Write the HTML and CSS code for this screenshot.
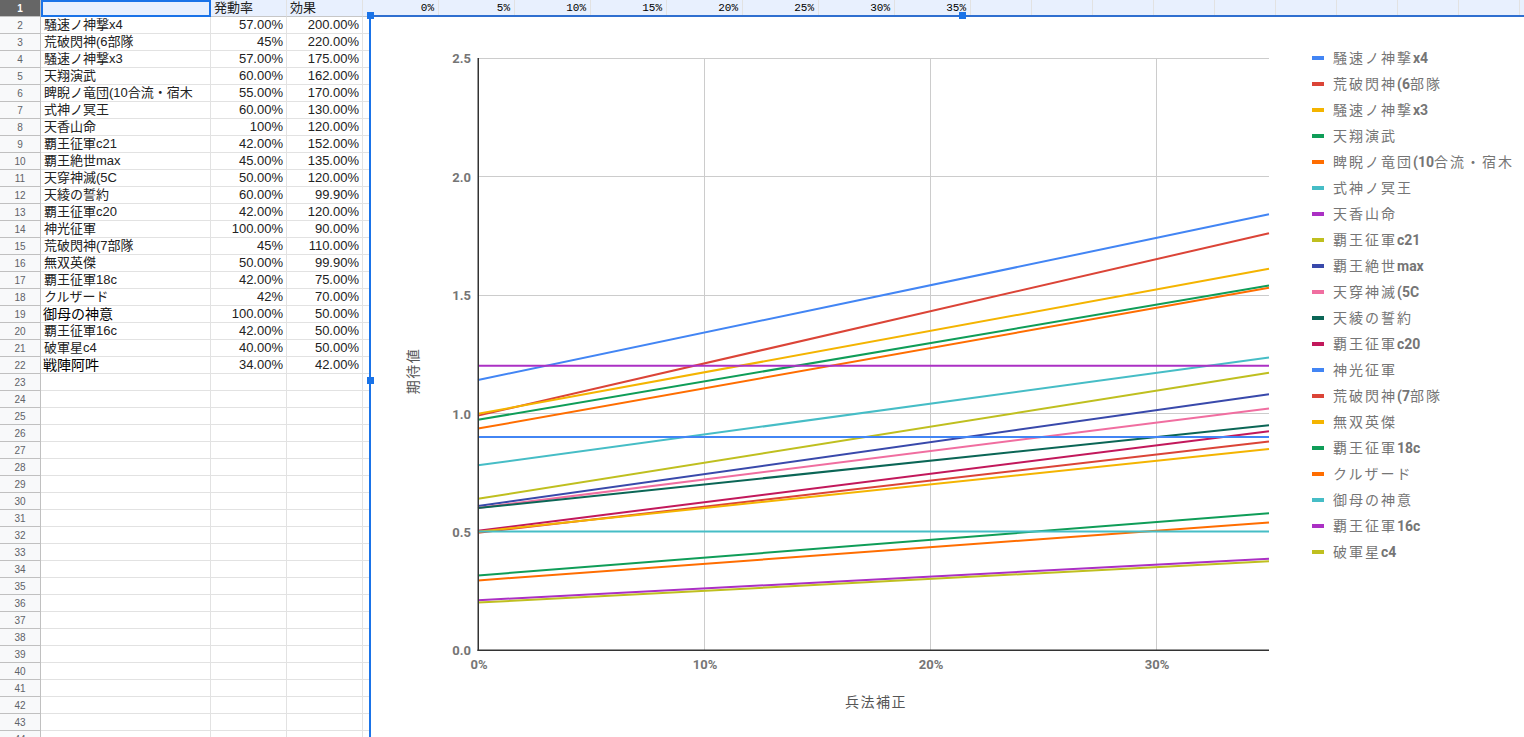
FILE: index.html
```html
<!DOCTYPE html>
<html lang="ja">
<head>
<meta charset="utf-8">
<title>Sheet</title>
<link rel="stylesheet" href="styles.css">
</head>
<body>
<div class="sheet">
  <div class="row head">
    <span class="rh">1</span><span class="cell name sel"></span><span class="cell">発動率</span><span class="cell">効果</span>
    <span class="cell pct">0%</span><span class="cell pct">5%</span><span class="cell pct">10%</span><span class="cell pct">15%</span><span class="cell pct">20%</span><span class="cell pct">25%</span><span class="cell pct">30%</span><span class="cell pct">35%</span>
    <span class="cell narrow"></span><span class="cell narrow"></span><span class="cell narrow"></span><span class="cell narrow"></span><span class="cell narrow"></span><span class="cell narrow"></span><span class="cell narrow"></span><span class="cell narrow"></span><span class="cell narrow"></span><span class="cell narrow"></span>
  </div>
  <div class="row"><span class="rh">2</span><span class="cell name">騒速ノ神撃x4</span><span class="cell num">57.00%</span><span class="cell num">200.00%</span><span class="cell"></span></div>
  <div class="row"><span class="rh">3</span><span class="cell name">荒破閃神(6部隊</span><span class="cell num">45%</span><span class="cell num">220.00%</span><span class="cell"></span></div>
  <div class="row"><span class="rh">4</span><span class="cell name">騒速ノ神撃x3</span><span class="cell num">57.00%</span><span class="cell num">175.00%</span><span class="cell"></span></div>
  <div class="row"><span class="rh">5</span><span class="cell name">天翔演武</span><span class="cell num">60.00%</span><span class="cell num">162.00%</span><span class="cell"></span></div>
  <div class="row"><span class="rh">6</span><span class="cell name">睥睨ノ竜団(10合流・宿木</span><span class="cell num">55.00%</span><span class="cell num">170.00%</span><span class="cell"></span></div>
  <div class="row"><span class="rh">7</span><span class="cell name">式神ノ冥王</span><span class="cell num">60.00%</span><span class="cell num">130.00%</span><span class="cell"></span></div>
  <div class="row"><span class="rh">8</span><span class="cell name">天香山命</span><span class="cell num">100%</span><span class="cell num">120.00%</span><span class="cell"></span></div>
  <div class="row"><span class="rh">9</span><span class="cell name">覇王征軍c21</span><span class="cell num">42.00%</span><span class="cell num">152.00%</span><span class="cell"></span></div>
  <div class="row"><span class="rh">10</span><span class="cell name">覇王絶世max</span><span class="cell num">45.00%</span><span class="cell num">135.00%</span><span class="cell"></span></div>
  <div class="row"><span class="rh">11</span><span class="cell name">天穿神滅(5C</span><span class="cell num">50.00%</span><span class="cell num">120.00%</span><span class="cell"></span></div>
  <div class="row"><span class="rh">12</span><span class="cell name">天綾の誓約</span><span class="cell num">60.00%</span><span class="cell num">99.90%</span><span class="cell"></span></div>
  <div class="row"><span class="rh">13</span><span class="cell name">覇王征軍c20</span><span class="cell num">42.00%</span><span class="cell num">120.00%</span><span class="cell"></span></div>
  <div class="row"><span class="rh">14</span><span class="cell name">神光征軍</span><span class="cell num">100.00%</span><span class="cell num">90.00%</span><span class="cell"></span></div>
  <div class="row"><span class="rh">15</span><span class="cell name">荒破閃神(7部隊</span><span class="cell num">45%</span><span class="cell num">110.00%</span><span class="cell"></span></div>
  <div class="row"><span class="rh">16</span><span class="cell name">無双英傑</span><span class="cell num">50.00%</span><span class="cell num">99.90%</span><span class="cell"></span></div>
  <div class="row"><span class="rh">17</span><span class="cell name">覇王征軍18c</span><span class="cell num">42.00%</span><span class="cell num">75.00%</span><span class="cell"></span></div>
  <div class="row"><span class="rh">18</span><span class="cell name">クルザード</span><span class="cell num">42%</span><span class="cell num">70.00%</span><span class="cell"></span></div>
  <div class="row"><span class="rh">19</span><span class="cell name alt">御母の神意</span><span class="cell num">100.00%</span><span class="cell num">50.00%</span><span class="cell"></span></div>
  <div class="row"><span class="rh">20</span><span class="cell name">覇王征軍16c</span><span class="cell num">42.00%</span><span class="cell num">50.00%</span><span class="cell"></span></div>
  <div class="row"><span class="rh">21</span><span class="cell name">破軍星c4</span><span class="cell num">40.00%</span><span class="cell num">50.00%</span><span class="cell"></span></div>
  <div class="row"><span class="rh">22</span><span class="cell name alt">戦陣阿吽</span><span class="cell num">34.00%</span><span class="cell num">42.00%</span><span class="cell"></span></div>
  <div class="row"><span class="rh">23</span><span class="cell name"></span><span class="cell"></span><span class="cell"></span><span class="cell"></span></div>
  <div class="row"><span class="rh">24</span><span class="cell name"></span><span class="cell"></span><span class="cell"></span><span class="cell"></span></div>
  <div class="row"><span class="rh">25</span><span class="cell name"></span><span class="cell"></span><span class="cell"></span><span class="cell"></span></div>
  <div class="row"><span class="rh">26</span><span class="cell name"></span><span class="cell"></span><span class="cell"></span><span class="cell"></span></div>
  <div class="row"><span class="rh">27</span><span class="cell name"></span><span class="cell"></span><span class="cell"></span><span class="cell"></span></div>
  <div class="row"><span class="rh">28</span><span class="cell name"></span><span class="cell"></span><span class="cell"></span><span class="cell"></span></div>
  <div class="row"><span class="rh">29</span><span class="cell name"></span><span class="cell"></span><span class="cell"></span><span class="cell"></span></div>
  <div class="row"><span class="rh">30</span><span class="cell name"></span><span class="cell"></span><span class="cell"></span><span class="cell"></span></div>
  <div class="row"><span class="rh">31</span><span class="cell name"></span><span class="cell"></span><span class="cell"></span><span class="cell"></span></div>
  <div class="row"><span class="rh">32</span><span class="cell name"></span><span class="cell"></span><span class="cell"></span><span class="cell"></span></div>
  <div class="row"><span class="rh">33</span><span class="cell name"></span><span class="cell"></span><span class="cell"></span><span class="cell"></span></div>
  <div class="row"><span class="rh">34</span><span class="cell name"></span><span class="cell"></span><span class="cell"></span><span class="cell"></span></div>
  <div class="row"><span class="rh">35</span><span class="cell name"></span><span class="cell"></span><span class="cell"></span><span class="cell"></span></div>
  <div class="row"><span class="rh">36</span><span class="cell name"></span><span class="cell"></span><span class="cell"></span><span class="cell"></span></div>
  <div class="row"><span class="rh">37</span><span class="cell name"></span><span class="cell"></span><span class="cell"></span><span class="cell"></span></div>
  <div class="row"><span class="rh">38</span><span class="cell name"></span><span class="cell"></span><span class="cell"></span><span class="cell"></span></div>
  <div class="row"><span class="rh">39</span><span class="cell name"></span><span class="cell"></span><span class="cell"></span><span class="cell"></span></div>
  <div class="row"><span class="rh">40</span><span class="cell name"></span><span class="cell"></span><span class="cell"></span><span class="cell"></span></div>
  <div class="row"><span class="rh">41</span><span class="cell name"></span><span class="cell"></span><span class="cell"></span><span class="cell"></span></div>
  <div class="row"><span class="rh">42</span><span class="cell name"></span><span class="cell"></span><span class="cell"></span><span class="cell"></span></div>
  <div class="row"><span class="rh">43</span><span class="cell name"></span><span class="cell"></span><span class="cell"></span><span class="cell"></span></div>
  <div class="row"><span class="rh">44</span><span class="cell name"></span><span class="cell"></span><span class="cell"></span><span class="cell"></span></div>

  <div class="chart">
    <svg class="plot" width="1184" height="730" viewBox="371 17 1184 730" xmlns="http://www.w3.org/2000/svg">
      <g class="grid" stroke="#cccccc" stroke-width="1">
        <line x1="478" y1="58.5" x2="1269" y2="58.5"/>
        <line x1="478" y1="176.5" x2="1269" y2="176.5"/>
        <line x1="478" y1="295.5" x2="1269" y2="295.5"/>
        <line x1="478" y1="413.5" x2="1269" y2="413.5"/>
        <line x1="478" y1="531.5" x2="1269" y2="531.5"/>
        <line x1="704.5" y1="58" x2="704.5" y2="650"/>
        <line x1="930.5" y1="58" x2="930.5" y2="650"/>
        <line x1="1156.5" y1="58" x2="1156.5" y2="650"/>
      </g>
      <g class="series" stroke-width="2" fill="none">
        <line x1="478" y1="380.0" x2="1269" y2="214.3" stroke="#4285f4"/>
        <line x1="478" y1="415.6" x2="1269" y2="233.2" stroke="#db4437"/>
        <line x1="478" y1="413.8" x2="1269" y2="268.8" stroke="#f4b400"/>
        <line x1="478" y1="419.8" x2="1269" y2="285.6" stroke="#0f9d58"/>
        <line x1="478" y1="428.6" x2="1269" y2="287.7" stroke="#ff6d00"/>
        <line x1="478" y1="465.3" x2="1269" y2="357.6" stroke="#46bdc6"/>
        <line x1="478" y1="365.8" x2="1269" y2="365.8" stroke="#ab30c4"/>
        <line x1="478" y1="498.8" x2="1269" y2="372.8" stroke="#bfbf1f"/>
        <line x1="478" y1="506.1" x2="1269" y2="394.3" stroke="#3949ab"/>
        <line x1="478" y1="507.9" x2="1269" y2="408.5" stroke="#f06ea0"/>
        <line x1="478" y1="508.1" x2="1269" y2="425.3" stroke="#0b6656"/>
        <line x1="478" y1="530.7" x2="1269" y2="431.2" stroke="#c2185b"/>
        <line x1="478" y1="436.9" x2="1269" y2="436.9" stroke="#4285f4"/>
        <line x1="478" y1="532.8" x2="1269" y2="441.6" stroke="#db4437"/>
        <line x1="478" y1="531.7" x2="1269" y2="449.0" stroke="#f4b400"/>
        <line x1="478" y1="575.4" x2="1269" y2="513.2" stroke="#0f9d58"/>
        <line x1="478" y1="580.4" x2="1269" y2="522.4" stroke="#ff6d00"/>
        <line x1="478" y1="531.6" x2="1269" y2="531.6" stroke="#46bdc6"/>
        <line x1="478" y1="600.3" x2="1269" y2="558.8" stroke="#ab30c4"/>
        <line x1="478" y1="602.6" x2="1269" y2="561.2" stroke="#bfbf1f"/>
      </g>
      <g class="axes" stroke="#333333" stroke-width="1.5">
        <line x1="478.25" y1="58" x2="478.25" y2="651"/>
        <line x1="477.5" y1="650.25" x2="1269" y2="650.25"/>
      </g>
      <g class="ticks">
        <text x="471" y="63" text-anchor="end">2.5</text>
        <text x="471" y="181.5" text-anchor="end">2.0</text>
        <text x="471" y="300" text-anchor="end">1.5</text>
        <text x="471" y="418.5" text-anchor="end">1.0</text>
        <text x="471" y="536.5" text-anchor="end">0.5</text>
        <text x="471" y="655" text-anchor="end">0.0</text>
        <text x="479" y="669" text-anchor="middle">0%</text>
        <text x="705" y="669" text-anchor="middle">10%</text>
        <text x="931" y="669" text-anchor="middle">20%</text>
        <text x="1157" y="669" text-anchor="middle">30%</text>
      </g>
      <text class="title" x="876" y="707" text-anchor="middle">兵法補正</text>
      <text class="title" transform="translate(418 371) rotate(-90)" text-anchor="middle">期待値</text>
    </svg>

    <div class="legend">
      <div class="li"><span class="sw c1"></span><span class="lt"><span class="j">騒速ノ神撃</span>x4</span></div>
      <div class="li"><span class="sw c2"></span><span class="lt"><span class="j">荒破閃神</span>(6<span class="j">部隊</span></span></div>
      <div class="li"><span class="sw c3"></span><span class="lt"><span class="j">騒速ノ神撃</span>x3</span></div>
      <div class="li"><span class="sw c4"></span><span class="lt"><span class="j">天翔演武</span></span></div>
      <div class="li"><span class="sw c5"></span><span class="lt"><span class="j">睥睨ノ竜団</span>(10<span class="j">合流・宿木</span></span></div>
      <div class="li"><span class="sw c6"></span><span class="lt"><span class="j">式神ノ冥王</span></span></div>
      <div class="li"><span class="sw c7"></span><span class="lt"><span class="j">天香山命</span></span></div>
      <div class="li"><span class="sw c8"></span><span class="lt"><span class="j">覇王征軍</span>c21</span></div>
      <div class="li"><span class="sw c9"></span><span class="lt"><span class="j">覇王絶世</span>max</span></div>
      <div class="li"><span class="sw c10"></span><span class="lt"><span class="j">天穿神滅</span>(5C</span></div>
      <div class="li"><span class="sw c11"></span><span class="lt"><span class="j">天綾の誓約</span></span></div>
      <div class="li"><span class="sw c12"></span><span class="lt"><span class="j">覇王征軍</span>c20</span></div>
      <div class="li"><span class="sw c1"></span><span class="lt"><span class="j">神光征軍</span></span></div>
      <div class="li"><span class="sw c2"></span><span class="lt"><span class="j">荒破閃神</span>(7<span class="j">部隊</span></span></div>
      <div class="li"><span class="sw c3"></span><span class="lt"><span class="j">無双英傑</span></span></div>
      <div class="li"><span class="sw c4"></span><span class="lt"><span class="j">覇王征軍</span>18c</span></div>
      <div class="li"><span class="sw c5"></span><span class="lt"><span class="j">クルザード</span></span></div>
      <div class="li"><span class="sw c6"></span><span class="lt"><span class="j">御母の神意</span></span></div>
      <div class="li"><span class="sw c7"></span><span class="lt"><span class="j">覇王征軍</span>16c</span></div>
      <div class="li"><span class="sw c8"></span><span class="lt"><span class="j">破軍星</span>c4</span></div>
    </div>
  </div>

  <span class="handle h-tl"></span>
  <span class="handle h-tm"></span>
  <span class="handle h-ml"></span>
</div>
</body>
</html>
```

FILE: styles.css
```css
* { box-sizing: border-box; }
html, body { margin: 0; padding: 0; background: #ffffff; }
body { font-family: "Liberation Sans", "Noto Sans CJK JP", sans-serif; }

.sheet {
  position: relative;
  width: 1524px;
  height: 737px;
  overflow: hidden;
  background: #ffffff;
}

.row { display: flex; height: 17px; }

.rh {
  flex: none;
  width: 41px;
  height: 17px;
  border-right: 1px solid #c0c0c0;
  border-bottom: 1px solid #c0c0c0;
  background: #f8f9fa;
  color: #5f6368;
  font-size: 10px;
  line-height: 17px;
  text-align: center;
}

.cell {
  flex: none;
  display: block;
  width: 76px;
  height: 17px;
  padding: 0 3px;
  border-right: 1px solid #e2e2e2;
  border-bottom: 1px solid #e2e2e2;
  font-size: 13px;
  line-height: 16px;
  color: #222222;
  white-space: nowrap;
  overflow: hidden;
}
.cell.name { width: 170px; }
.cell.num { text-align: right; }
.cell.narrow { width: 61px; }
.cell.alt { color: #000000; font-size: 14px; padding-left: 2px; }

.row.head .cell { background: #e8f0fe; border-bottom-color: #c7c7c7; }
.row.head .rh { background: #666666; color: #ffffff; font-weight: bold; }
.cell.sel { outline: 2px solid #1a73e8; outline-offset: -2px; }
.cell.pct {
  text-align: right;
  font-family: "Liberation Mono", monospace;
  font-size: 11px;
  color: #000000;
  padding-right: 4px;
  line-height: 17px;
}

.chart {
  position: absolute;
  left: 369px;
  top: 15px;
  width: 1188px;
  height: 734px;
  border-top: 2px solid #2f6fd0;
  border-left: 2px solid #1a73e8;
  background: #ffffff;
}
.plot { position: absolute; left: 0; top: 0; display: block; }
.ticks text {
  font-family: Roboto, "Liberation Sans", sans-serif;
  font-weight: bold;
  font-size: 13px;
  fill: #757575;
}
.title {
  font-family: "Noto Sans CJK JP", sans-serif;
  font-size: 14px;
  fill: #555555;
  letter-spacing: 1.5px;
}

.legend {
  position: absolute;
  left: 941px;
  top: 28px;
  display: flex;
  flex-direction: column;
}
.li {
  display: flex;
  align-items: center;
  gap: 9px;
  height: 26px;
}
.sw { flex: none; width: 12px; height: 4px; }
.lt {
  font-family: Roboto, "Noto Sans CJK JP", sans-serif;
  font-size: 14px;
  font-weight: bold;
  color: #757575;
  white-space: nowrap;
  line-height: 26px;
}
.lt .j { font-weight: normal; letter-spacing: 2px; }

.c1 { background: #4285f4; }
.c2 { background: #db4437; }
.c3 { background: #f4b400; }
.c4 { background: #0f9d58; }
.c5 { background: #ff6d00; }
.c6 { background: #46bdc6; }
.c7 { background: #ab30c4; }
.c8 { background: #bfbf1f; }
.c9 { background: #3949ab; }
.c10 { background: #f06ea0; }
.c11 { background: #0b6656; }
.c12 { background: #c2185b; }

.handle {
  position: absolute;
  width: 7px;
  height: 7px;
  background: #1a73e8;
}
.h-tl { left: 367px; top: 12px; }
.h-tm { left: 959px; top: 12px; }
.h-ml { left: 367px; top: 377px; }
```
